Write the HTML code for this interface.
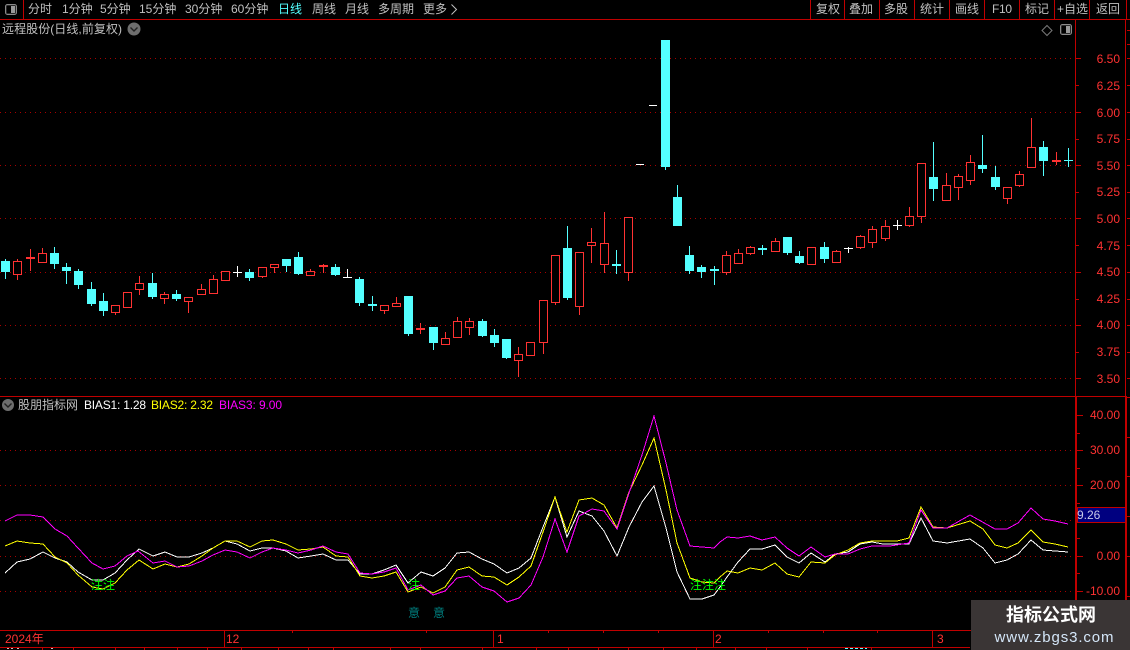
<!DOCTYPE html>
<html lang="zh"><head><meta charset="utf-8"><title>BIAS</title>
<style>
html,body{margin:0;padding:0;background:#000;width:1130px;height:650px;overflow:hidden}
svg{display:block;position:absolute;left:0;top:0}
text{font-family:"Liberation Sans","WenQuanYi Zen Hei","Noto Sans CJK SC",sans-serif;font-size:12px}
.t text{fill:#c0c0c0}
.ax text{fill:#ff3232;text-anchor:end}
.b text{fill:#ff3232}
.grid path{stroke:#a80000;stroke-width:1;stroke-dasharray:1 4;fill:none}
.ln{stroke:#c00000;stroke-width:1;fill:none;shape-rendering:crispEdges}
.r rect{fill:#000;stroke:#ff3232;stroke-width:1;shape-rendering:crispEdges}
.c rect{fill:#54ffff;shape-rendering:crispEdges}
.l polyline{fill:none;stroke-width:1;shape-rendering:crispEdges}
</style></head><body>
<svg width="1130" height="650" viewBox="0 0 1130 650" xmlns="http://www.w3.org/2000/svg">
<rect width="1130" height="650" fill="#000"/>

<g class="grid">
<path d="M0 58.5H1075M0 112.5H1075M0 165.5H1075M0 218.5H1075M0 272.5H1075M0 325.5H1075M0 378.5H1075"/>
<path d="M0 450.5H1075M0 485.5H1075M0 520.5H1075M0 556.5H1075M0 591.5H1075"/>
</g>

<!-- frame lines -->
<path class="ln" d="M0 19.5H1130M0 396.5H1126M0 630.5H1075M0 647.5H970"/>
<path class="ln" d="M23.5 0V19M810.5 0V19M844.5 0V19M879.5 0V19M914.5 0V19M949.5 0V19M984.5 0V19M1019.5 0V19M1054.5 0V19M1089.5 0V19M1126.5 0V19"/>
<path class="ln" d="M1075.5 19V396M1125.5 19V396"/>
<path class="ln" d="M1075.5 396V630M1076.5 396V630M1125.5 396V630M1126.5 396V630"/>
<path class="ln" d="M224.5 630V647M493.5 630V647M713.5 630V647M932.5 630V647"/>
<path class="ln" d="M292.5 631V633M426.5 631V633M548.5 631V633M603.5 631V633M658.5 631V633M768.5 631V633M823.5 631V633M877.5 631V633"/>
<path class="ln" d="M42.5 647V650M73.5 647V650M115.5 647V650M144.5 647V650M177.5 647V650M207.5 647V650M241.5 647V650M278.5 647V650M308.5 647V650M333.5 647V650M390.5 647V650M420.5 647V650M482.5 647V650M536.5 647V650M568.5 647V650M598.5 647V650M628.5 647V650M663.5 647V650M696.5 647V650M735.5 647V650M766.5 647V650M807.5 647V650M871.5 647V650"/>
<!-- axis ticks -->
<path class="ln" d="M1076 58.5H1081M1076 112.5H1081M1076 165.5H1081M1076 218.5H1081M1076 272.5H1081M1076 325.5H1081M1076 378.5H1081"/>
<path class="ln" d="M1076 85.5H1079M1076 139.5H1079M1076 192.5H1079M1076 245.5H1079M1076 299.5H1079M1076 352.5H1079"/>
<path class="ln" d="M1077 415.5H1083M1077 450.5H1083M1077 485.5H1083M1077 556.5H1083M1077 591.5H1083"/>
<path class="ln" d="M1077 433.5H1080M1077 468.5H1080M1077 503.5H1080M1077 538.5H1080M1077 573.5H1080M1077 609.5H1080"/>
<path class="ln" d="M1127 30.5H1130M1127 44.5H1130M1127 58.5H1130M1127 85.5H1130M1127 112.5H1130M1127 139.5H1130M1127 165.5H1130M1127 192.5H1130M1127 218.5H1130M1127 245.5H1130M1127 272.5H1130M1127 299.5H1130M1127 325.5H1130M1127 352.5H1130M1127 378.5H1130M1127 397.5H1130M1127 437.5H1130M1127 476.5H1130M1127 516.5H1130M1127 556.5H1130M1127 596.5H1130"/>

<!-- top bar -->
<g class="t">
<text x="28" y="13">分时</text>
<text x="62" y="13">1分钟</text>
<text x="100" y="13">5分钟</text>
<text x="139" y="13">15分钟</text>
<text x="185" y="13">30分钟</text>
<text x="231" y="13">60分钟</text>
<text x="278" y="13" style="fill:#54ffff">日线</text>
<text x="312" y="13">周线</text>
<text x="345" y="13">月线</text>
<text x="378" y="13">多周期</text>
<text x="423" y="13">更多</text>
<text x="816" y="13">复权</text>
<text x="849" y="13">叠加</text>
<text x="884" y="13">多股</text>
<text x="920" y="13">统计</text>
<text x="955" y="13">画线</text>
<text x="992" y="13" textLength="20">F10</text>
<text x="1025" y="13">标记</text>
<text x="1057" y="13">+自选</text>
<text x="1096" y="13">返回</text>
<text x="2" y="33" textLength="120" lengthAdjust="spacing">远程股份(日线,前复权)</text>
<text x="18" y="409">股朋指标网</text>
</g>
<path d="M451.5 4.5L456.5 9.5L451.5 14.5" fill="none" stroke="#c0c0c0" stroke-width="1"/>
<!-- top-left panel icon -->
<rect x="5.5" y="4.5" width="11" height="10" rx="2" fill="#2a2a2a" stroke="#8a8a8a"/>
<rect x="7" y="6" width="4" height="7" fill="#000"/><rect x="11" y="6" width="4" height="7" fill="#9a9a9a"/>
<!-- title chevron button -->
<circle cx="134" cy="29" r="6.5" fill="#6e6e6e"/>
<path d="M130.5 27.5L134 31L137.5 27.5" fill="none" stroke="#222" stroke-width="1.4"/>
<!-- diamond + panel icon -->
<path d="M1047 25.5L1052 30.5L1047 35.5L1042 30.5Z" fill="none" stroke="#7a7a7a"/>
<rect x="1060.5" y="24.5" width="11" height="10" rx="2" fill="#2a2a2a" stroke="#8a8a8a"/>
<rect x="1062" y="26" width="4" height="7" fill="#000"/><rect x="1066" y="26" width="4" height="7" fill="#9a9a9a"/>
<!-- sub panel chevron -->
<circle cx="8" cy="405" r="6" fill="#6e6e6e"/>
<path d="M4.5 403.5L8 407L11.5 403.5" fill="none" stroke="#222" stroke-width="1.4"/>

<text x="84" y="409" fill="#fff" textLength="62">BIAS1: 1.28</text>
<text x="151" y="409" fill="#ffff00" textLength="62">BIAS2: 2.32</text>
<text x="219" y="409" fill="#ff00ff" textLength="63">BIAS3: 9.00</text>

<!-- axis labels -->
<g class="ax">
<text x="1120" y="63">6.50</text><text x="1120" y="90">6.25</text><text x="1120" y="117">6.00</text><text x="1120" y="143">5.75</text><text x="1120" y="170">5.50</text><text x="1120" y="196">5.25</text><text x="1120" y="223">5.00</text><text x="1120" y="250">4.75</text><text x="1120" y="276">4.50</text><text x="1120" y="303">4.25</text><text x="1120" y="329">4.00</text><text x="1120" y="356">3.75</text><text x="1120" y="383">3.50</text>
<text x="1120" y="419">40.00</text><text x="1120" y="454">30.00</text><text x="1120" y="489">20.00</text><text x="1120" y="560">0.00</text><text x="1120" y="595">-10.00</text>
</g>
<rect x="1077.5" y="507.5" width="48" height="15" fill="#000080" stroke="#c00000"/>
<text x="1077" y="519" fill="#c8c8e8">9.26</text>

<!-- date labels -->
<g class="b">
<text x="5" y="643">2024年</text>
<text x="226" y="643">12</text>
<text x="497" y="643">1</text>
<text x="715" y="643">2</text>
<text x="937" y="643">3</text>
</g>
<path d="M7 648.5H9M11 648.5H13M17 648.5H19M51 648.5H53" stroke="#c0c0c0" fill="none"/>
<path d="M845 648.5H867" stroke="#54ffff" stroke-dasharray="3 2" fill="none"/>

<!-- red wicks -->
<path fill="none" stroke="#ff3232" shape-rendering="crispEdges" d="M17.5 259V280M30.5 249V271M42.5 248V263M115.5 312V315M139.5 276V295M164.5 292V304M188.5 301V313M201.5 284V294M213.5 275V293M262.5 276V278M274.5 267V273M310.5 269V276M323.5 264V273M384.5 310V314M396.5 297V306M420.5 323V334M445.5 332V344M457.5 317V338M469.5 318V335M518.5 347V377M543.5 342V354M555.5 302V305M579.5 306V315M591.5 228V263M604.5 212V273M628.5 272V281M726.5 251V275M738.5 249V263M750.5 246V255M775.5 238V251M836.5 250V262M860.5 235V249M872.5 226V248M885.5 220V241M909.5 207V227M921.5 216V223M946.5 173V200M958.5 174V200M970.5 155V185M1007.5 198V204M1019.5 171V187M1031.5 118V167M1056.5 152V165"/>
<!-- red bodies -->
<g class="r">
<rect x="13.5" y="261.5" width="8" height="13"/><rect x="38.5" y="253.5" width="8" height="9"/><rect x="111.5" y="305.5" width="8" height="7"/><rect x="123.5" y="292.5" width="8" height="15"/><rect x="135.5" y="283.5" width="8" height="6"/><rect x="160.5" y="294.5" width="8" height="4"/><rect x="184.5" y="297.5" width="8" height="4"/><rect x="197.5" y="289.5" width="8" height="5"/><rect x="209.5" y="279.5" width="8" height="14"/><rect x="221.5" y="271.5" width="8" height="9"/><rect x="258.5" y="267.5" width="8" height="9"/><rect x="270.5" y="264.5" width="8" height="3"/><rect x="306.5" y="271.5" width="8" height="4"/><rect x="380.5" y="305.5" width="8" height="5"/><rect x="392.5" y="303.5" width="8" height="3"/><rect x="441.5" y="338.5" width="8" height="6"/><rect x="453.5" y="321.5" width="8" height="16"/><rect x="465.5" y="321.5" width="8" height="6"/><rect x="514.5" y="354.5" width="8" height="6"/><rect x="526.5" y="342.5" width="8" height="13"/><rect x="539.5" y="300.5" width="8" height="42"/><rect x="551.5" y="255.5" width="8" height="47"/><rect x="575.5" y="252.5" width="8" height="54"/><rect x="587.5" y="242.5" width="8" height="3"/><rect x="600.5" y="243.5" width="8" height="21"/><rect x="624.5" y="217.5" width="8" height="55"/><rect x="722.5" y="255.5" width="8" height="17"/><rect x="734.5" y="253.5" width="8" height="10"/><rect x="746.5" y="247.5" width="8" height="6"/><rect x="771.5" y="241.5" width="8" height="10"/><rect x="807.5" y="247.5" width="8" height="17"/><rect x="832.5" y="251.5" width="8" height="11"/><rect x="856.5" y="236.5" width="8" height="11"/><rect x="868.5" y="229.5" width="8" height="13"/><rect x="881.5" y="226.5" width="8" height="12"/><rect x="905.5" y="216.5" width="8" height="9"/><rect x="917.5" y="163.5" width="8" height="53"/><rect x="942.5" y="185.5" width="8" height="15"/><rect x="954.5" y="176.5" width="8" height="11"/><rect x="966.5" y="162.5" width="8" height="18"/><rect x="1003.5" y="187.5" width="8" height="11"/><rect x="1015.5" y="174.5" width="8" height="11"/><rect x="1027.5" y="147.5" width="8" height="20"/>
</g>
<!-- red solid dojis -->
<path fill="none" stroke="#ff3232" stroke-width="2" shape-rendering="crispEdges" d="M26 258H35M319 266H328M416 329H425M1052 161H1061"/>

<!-- cyan wicks -->
<path fill="none" stroke="#54ffff" shape-rendering="crispEdges" d="M5.5 259V279M54.5 247V269M66.5 263V284M78.5 269V289M91.5 282V306M103.5 293V316M152.5 273V299M176.5 290V301M249.5 269V281M286.5 266V272M298.5 252V275M335.5 264V276M359.5 277V306M372.5 296V311M408.5 334V336M433.5 343V350M482.5 319V337M494.5 329V347M506.5 358V359M567.5 226V300M616.5 250V274M665.5 167V170M677.5 185V197M689.5 246V274M701.5 265V278M714.5 266V285M762.5 245V255M787.5 253V255M799.5 251V264M824.5 242V263M933.5 142V201M982.5 135V173M995.5 166V190M1043.5 141V176M1068.5 148V167"/>
<g class="c">
<rect x="1" y="261" width="9" height="11"/><rect x="50" y="253" width="9" height="11"/><rect x="62" y="267" width="9" height="4"/><rect x="74" y="271" width="9" height="14"/><rect x="87" y="289" width="9" height="15"/><rect x="99" y="301" width="9" height="10"/><rect x="148" y="283" width="9" height="14"/><rect x="172" y="294" width="9" height="5"/><rect x="245" y="272" width="9" height="6"/><rect x="282" y="259" width="9" height="7"/><rect x="294" y="257" width="9" height="17"/><rect x="331" y="267" width="9" height="8"/><rect x="355" y="279" width="9" height="24"/><rect x="368" y="304" width="9" height="2"/><rect x="404" y="296" width="9" height="38"/><rect x="429" y="327" width="9" height="16"/><rect x="478" y="321" width="9" height="15"/><rect x="490" y="335" width="9" height="8"/><rect x="502" y="339" width="9" height="19"/><rect x="563" y="248" width="9" height="50"/><rect x="612" y="264" width="9" height="2"/><rect x="661" y="40" width="9" height="127"/><rect x="673" y="197" width="9" height="29"/><rect x="685" y="255" width="9" height="16"/><rect x="697" y="267" width="9" height="5"/><rect x="710" y="269" width="9" height="2"/><rect x="758" y="248" width="9" height="2"/><rect x="783" y="237" width="9" height="16"/><rect x="795" y="256" width="9" height="7"/><rect x="820" y="247" width="9" height="12"/><rect x="929" y="177" width="9" height="12"/><rect x="978" y="165" width="9" height="4"/><rect x="991" y="177" width="9" height="10"/><rect x="1039" y="147" width="9" height="14"/><rect x="1064" y="160" width="9" height="1"/>
</g>
<!-- white dojis -->
<path fill="none" stroke="#fff" shape-rendering="crispEdges" d="M237.5 266V277M233 272.5H242M347.5 269V278M343 277.5H352M848.5 247V253M844 248.5H853M897.5 220V230M893 225.5H902M649 105.5H657M636 164.5H644"/>

<!-- BIAS lines -->
<g class="l">
<polyline stroke="#fff" points="5,573 17,562 30,559 43,552 55,558 67,562 78,572 92,580 103,580 115,573 127,560 139,549 153,556 165,552 177,557 189,557 202,553 213,548 225,541 237,544 250,551 262,548 273,548 286,551 298,558 311,556 323,554 336,560 348,560 360,574 372,574 384,570 396,565 408,583 421,572 433,576 445,568 457,553 469,552 482,559 494,564 507,573 519,568 531,558 543,527 555,497 567,537 579,511 592,516 604,531 617,556 629,527 642,502 654,486 666,528 677,572 690,599 702,599 714,595 720,587 727,577 738,562 750,549 762,549 775,545 787,557 799,563 811,553 825,562 835,554 848,552 860,544 872,542 883,544 909,544 921,518 933,541 947,543 970,539 983,548 995,563 1007,560 1018,554 1031,540 1043,550 1055,551 1068,552"/>
<polyline stroke="#ffff00" points="5,546 17,541 30,543 43,544 55,557 67,563 78,575 92,587 103,589 115,583 127,570 139,560 153,569 165,564 177,567 189,564 202,556 213,548 225,541 237,541 250,547 262,541 273,540 286,544 298,550 311,549 323,547 336,556 348,557 360,576 372,578 384,576 396,572 408,592 421,587 433,593 445,587 457,570 469,567 482,576 494,577 507,585 519,577 531,566 543,532 555,497 567,532 579,500 592,498 604,505 617,528 629,492 642,465 654,438 666,490 677,543 690,578 702,582 714,583 720,577 727,571 738,573 750,568 762,570 775,563 787,574 799,577 811,562 825,563 835,555 848,550 860,543 872,541 897,541 909,538 921,507 933,527 947,528 970,521 983,529 995,545 1007,548 1018,543 1031,530 1043,542 1055,544 1068,547"/>
<polyline stroke="#ff00ff" points="5,521 17,515 30,515 43,517 55,529 67,536 78,548 92,563 103,569 115,566 127,556 138,551 153,563 165,561 177,567 189,566 202,561 213,555 225,550 237,552 250,558 262,552 273,548 286,550 298,553 311,550 323,546 336,552 348,554 360,573 372,574 384,572 396,568 408,590 421,585 433,595 445,591 457,578 469,576 482,587 494,591 507,602 519,598 531,585 543,557 555,519 567,552 579,516 592,509 604,511 617,529 629,493 642,455 654,416 666,463 677,510 690,546 702,547 714,548 720,542 727,537 738,538 750,536 762,540 775,537 787,548 799,556 811,547 825,557 835,554 848,554 860,549 872,546 890,546 909,543 921,510 933,528 947,528 970,515 995,529 1007,529 1018,523 1031,508 1043,519 1055,521 1068,524"/>
</g>

<!-- markers -->
<g fill="#00ff00" font-size="12">
<text x="91" y="589">注</text><text x="103" y="589">注</text>
<text x="408" y="589">注</text>
<text x="690" y="589">注</text><text x="702" y="589">注</text><text x="714" y="589">注</text>
</g>
<g fill="#008080">
<text x="408" y="617">意</text><text x="433" y="617">意</text>
</g>

<!-- watermark -->
<rect x="971" y="600" width="159" height="50" fill="#3a3535"/>
<text x="1051" y="621" text-anchor="middle" fill="#fff" style="font-size:18px;font-weight:bold">指标公式网</text>
<text x="1054" y="642" text-anchor="middle" fill="#d4e6f8" textLength="119" style="font-size:15px">www.zbgs3.com</text>
</svg>
</body></html>
